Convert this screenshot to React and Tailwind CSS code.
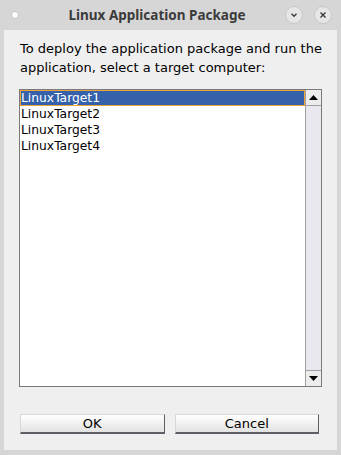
export default function App() {
  const targets = ['LinuxTarget1', 'LinuxTarget2', 'LinuxTarget3', 'LinuxTarget4']

  return (
    <div className="w-[341px] h-[455px] bg-[#d6d6d6] flex flex-col overflow-hidden">
      {/* title bar */}
      <div className="h-[30px] flex items-center pl-[11px] pr-[9px]">
        <div className="w-[8px] h-[8px] rounded-full bg-white border border-[#c4c4c4]" />
        <div className="flex-1 text-center text-[13.5px] font-bold text-[#3b3b3b] pl-[10px] font-['Noto_Sans',sans-serif]">
          Linux Application Package
        </div>
        <div className="flex items-center gap-[11px]">
          <div className="w-[18px] h-[18px] rounded-full bg-[#e6e6e6] border border-[#c8c8c8] flex items-center justify-center">
            <svg width="8" height="8" viewBox="0 0 8 8">
              <path d="M1.5 2.8 L4 5.2 L6.5 2.8" fill="none" stroke="#3b3b3b" strokeWidth="1.4" />
            </svg>
          </div>
          <div className="w-[18px] h-[18px] rounded-full bg-[#e6e6e6] border border-[#c8c8c8] flex items-center justify-center">
            <svg width="8" height="8" viewBox="0 0 8 8">
              <path d="M1.5 1.5 L6.5 6.5 M6.5 1.5 L1.5 6.5" fill="none" stroke="#3b3b3b" strokeWidth="1.4" />
            </svg>
          </div>
        </div>
      </div>

      {/* content */}
      <div className="mx-[4px] mb-[5px] flex-1 bg-[#efefef] flex flex-col px-[15px] pt-[9px] pb-[15px] font-['DejaVu_Sans',sans-serif]">
        <p className="text-[13px] leading-[19px] text-black pl-[1px]">
          To deploy the application package and run the application, select a target computer:
        </p>

        <div className="mt-[12px] h-[298px] flex border border-[#7a7a7a] bg-white">
          <div className="flex-1 flex flex-col">
            {targets.map((t, i) =>
              i === 0 ? (
                <div
                  key={t}
                  className="h-[16px] bg-[#3461a9] border border-[#eea43a] text-white text-[12.3px] leading-[14px]"
                >
                  {t}
                </div>
              ) : (
                <div key={t} className="h-[16px] text-black text-[12.3px] leading-[16px] pl-[1px]">
                  {t}
                </div>
              )
            )}
          </div>
          <div className="w-[16px] flex flex-col bg-[#e8e8ee] border-l border-[#a0a0a0]">
            <div className="h-[16px] bg-[#ececec] border-b border-[#a0a0a0] flex items-center justify-center">
              <svg width="9" height="5" viewBox="0 0 9 5">
                <path d="M0 5 L4.5 0 L9 5 Z" fill="#000" />
              </svg>
            </div>
            <div className="flex-1" />
            <div className="h-[16px] bg-[#ececec] border-t border-[#a0a0a0] flex items-center justify-center">
              <svg width="9" height="5" viewBox="0 0 9 5">
                <path d="M0 0 L9 0 L4.5 5 Z" fill="#000" />
              </svg>
            </div>
          </div>
        </div>

        <div className="mt-auto flex gap-[10px] pl-[1px] pr-[3px] mb-[1px]">
          <button className="flex-1 h-[20px] text-[13px] leading-[17px] text-black bg-gradient-to-b from-white to-[#e2e2e2] border border-[#d8d8d8] border-b-[#5e5e66] border-r-[#5e5e66] border-b-2">
            OK
          </button>
          <button className="flex-1 h-[20px] text-[13px] leading-[17px] text-black bg-gradient-to-b from-white to-[#e2e2e2] border border-[#d8d8d8] border-b-[#5e5e66] border-r-[#5e5e66] border-b-2">
            Cancel
          </button>
        </div>
      </div>
    </div>
  )
}
